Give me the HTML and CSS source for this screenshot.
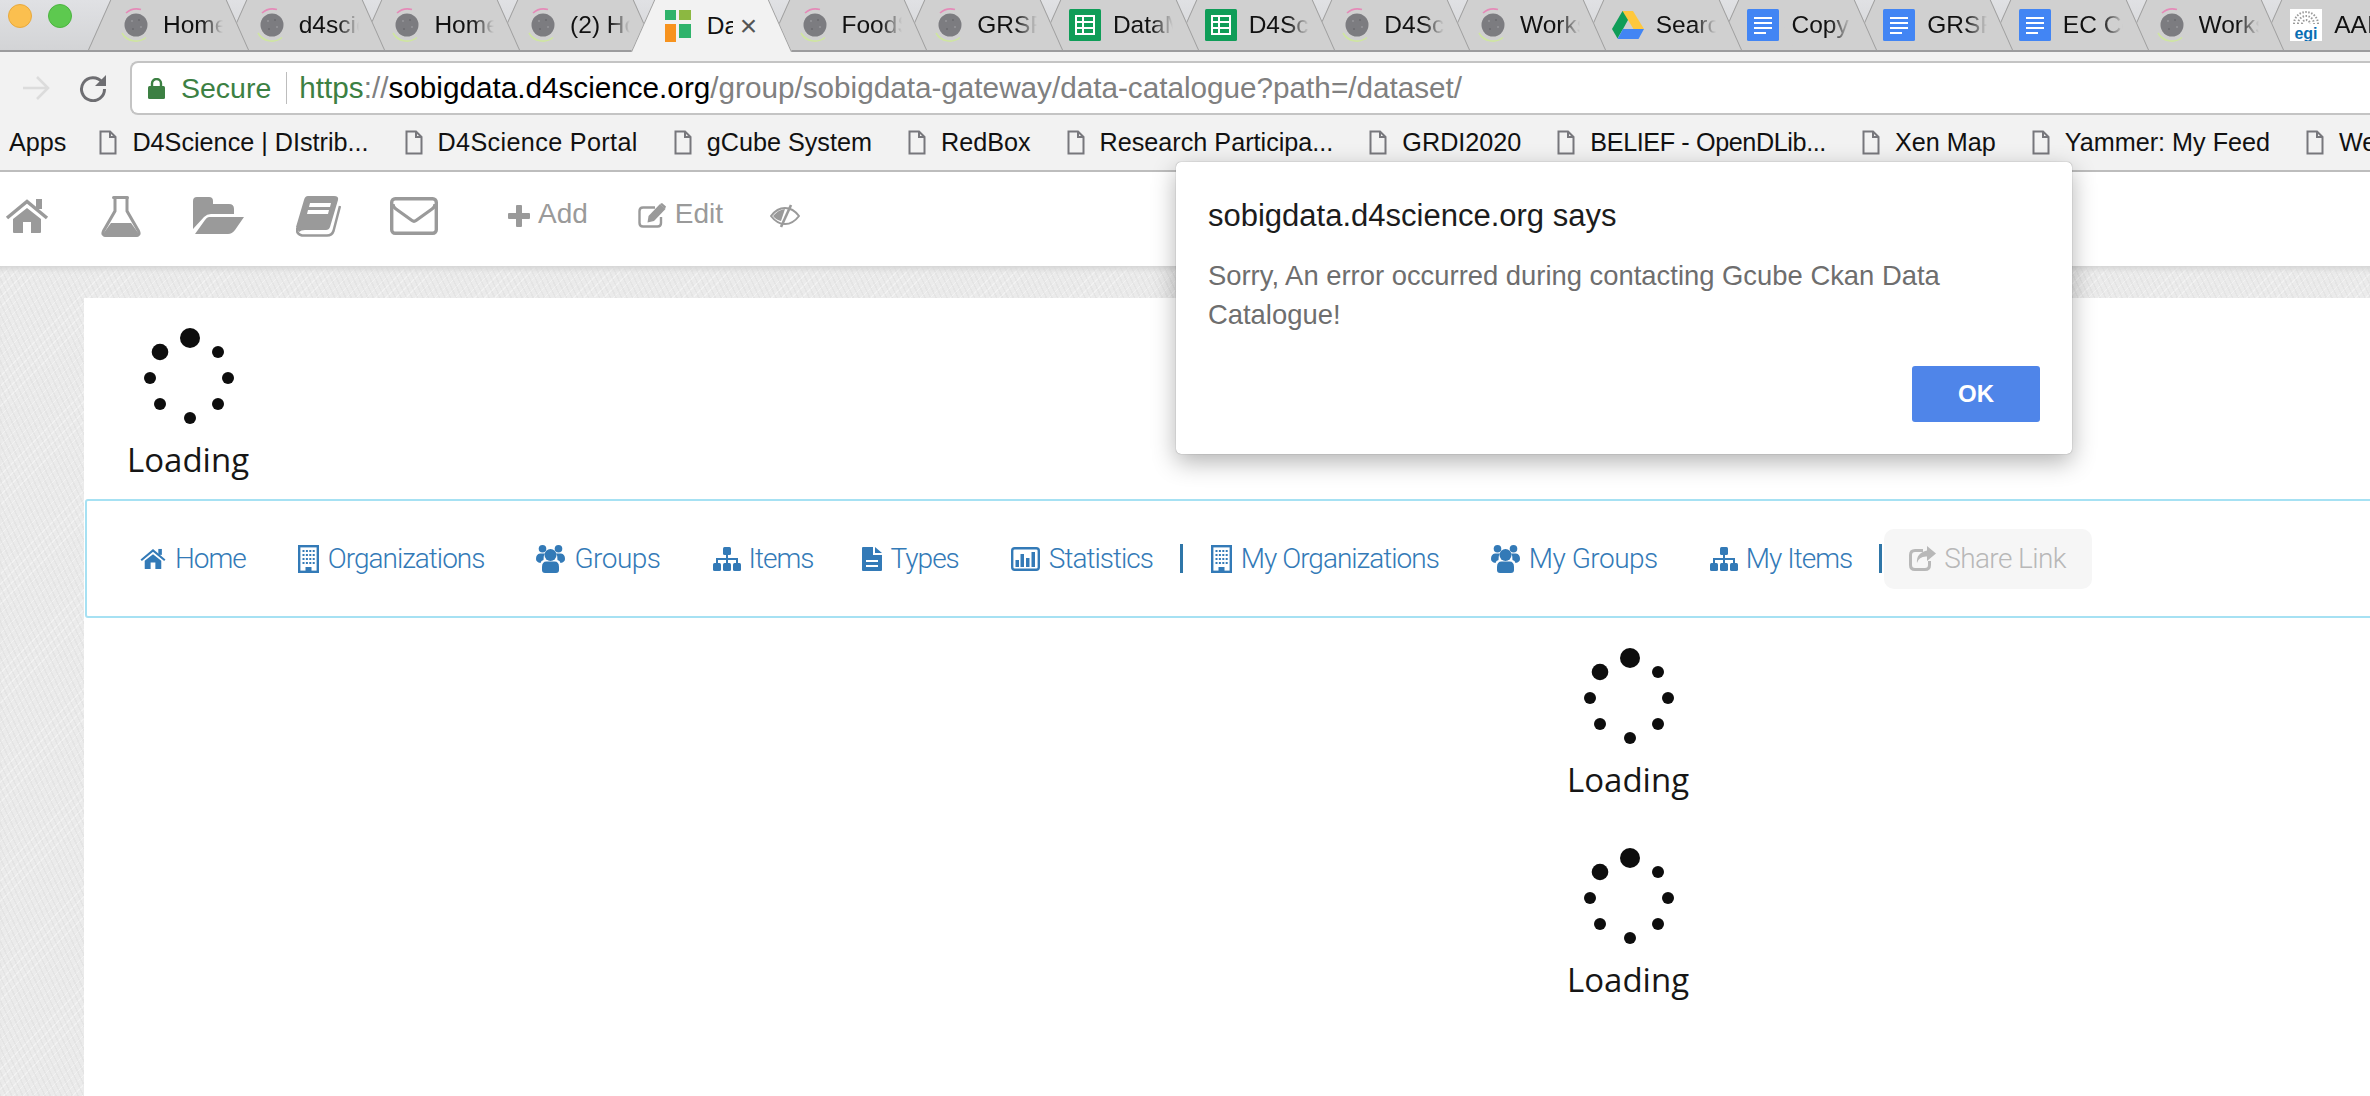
FILE: index.html
```html
<!DOCTYPE html>
<html lang="en">
<head>
<meta charset="utf-8">
<title>Data Catalogue</title>
<link rel="stylesheet" href="styles.css">
</head>
<body>
<svg class="defs" width="0" height="0" aria-hidden="true">
  <defs>
    <symbol id="i-fav" viewBox="0 0 34 34">
      <circle cx="17" cy="17" r="11.5" fill="#7c7c80"/>
      <circle cx="13" cy="13" r="1" fill="#96969a"/><circle cx="20" cy="12" r="1" fill="#6a6a6e"/><circle cx="22" cy="19" r="1" fill="#96969a"/><circle cx="14" cy="21" r="1" fill="#6a6a6e"/>
      <path d="M7 5 A16 16 0 0 1 22 1.6" fill="none" stroke="#e58ab8" stroke-width="1.6"/>
      <path d="M3 25 A16 16 0 0 0 27 29.5" fill="none" stroke="#cfe6a0" stroke-width="1.6"/>
    </symbol>
    <symbol id="i-sheet" viewBox="0 0 32 32">
      <rect width="32" height="32" rx="1.5" fill="#0f9d58"/>
      <path d="M7 7H25V25H7ZM7 13H25M7 19H25M14 7V25" fill="none" stroke="#fff" stroke-width="2"/>
    </symbol>
    <symbol id="i-doc" viewBox="0 0 32 32">
      <rect width="32" height="32" rx="1.5" fill="#4285f4"/>
      <path d="M7 9H25M7 14H25M7 19H25M7 24H19" fill="none" stroke="#fff" stroke-width="2.2"/>
    </symbol>
    <symbol id="i-drive" viewBox="0 0 32 28">
      <path d="M10.5 0H21L11 18 5.5 27.5 0 18Z" fill="#0f9d58"/>
      <path d="M10.5 0H21L32 18H21.5Z" fill="#ffc83d"/>
      <path d="M11 18H32L26.5 28H5.500Z" fill="#4285f4"/>
    </symbol>
    <symbol id="i-catalog" viewBox="0 0 26 32">
      <rect x="0" y="0" width="11" height="10" fill="#2fb36b"/>
      <rect x="14" y="0" width="12" height="10" fill="#8cb841"/>
      <rect x="0" y="14" width="11" height="18" fill="#f7931e"/>
      <rect x="14" y="14" width="12" height="14" fill="#2fb36b"/>
    </symbol>
    <symbol id="i-page" viewBox="0 0 18 25">
      <path d="M1.500 1.500H11L16.500 7V23.500H1.500ZM11 1.500V7H16.500" fill="none" stroke="#77777c" stroke-width="2"/>
    </symbol>
    <symbol id="i-home" viewBox="0 0 44 36">
      <path d="M8 21 22 10 36 21V34Q36 35 35 35H26V24H18V35H9Q8 35 8 34Z" fill="currentColor"/>
      <path d="M2 20 22 3.500 42 20" fill="none" stroke="currentColor" stroke-width="3.500"/>
      <rect x="31" y="1" width="6" height="10" fill="currentColor"/>
    </symbol>
    <symbol id="i-flask" viewBox="0 0 40 41">
      <rect x="11" y="0" width="17" height="3" rx="1.500" fill="currentColor"/>
      <path d="M14 2V15L2.500 35Q0.500 39.500 5 39.500H35Q39.500 39.500 37.500 35L26 15V2" fill="none" stroke="currentColor" stroke-width="3"/>
      <path d="M10 27H30L38 38Q38 41 35 41H5Q2 41 2 38Z" fill="currentColor"/>
    </symbol>
    <symbol id="i-folder" viewBox="0 0 51 38">
      <path d="M0 4Q0 0 4 0H16Q20 0 20 4V7H36Q41 7 41 12V17H18Q14 17 11 20L0 32Z" fill="currentColor"/>
      <path d="M16 20H51L42 33Q39 37 35 37H2L12 23Q14 20 16 20Z" fill="currentColor"/>
    </symbol>
    <symbol id="i-book" viewBox="0 0 45 41">
      <path fill-rule="evenodd" d="M12 0H38Q43 0 42 4L34 31Q33 34 30 34H9Q5 34 3 36L0 31 8 4Q9 0 12 0ZM14 7 13 11H34L35 7ZM12 14 11 18H32L33 14Z" fill="currentColor"/>
      <path d="M1 32Q0 38 6 39.500H31Q36 39.500 37.500 35L44 10" fill="none" stroke="currentColor" stroke-width="2.500"/>
    </symbol>
    <symbol id="i-mail" viewBox="0 0 48 38">
      <rect x="1.700" y="1.700" width="44.600" height="34.600" rx="3.500" fill="none" stroke="currentColor" stroke-width="3.400"/>
      <path d="M3 7 Q3 10 6 12L22 23.500Q24 25 26 23.500L42 12Q45 10 45 7" fill="none" stroke="currentColor" stroke-width="3.200"/>
    </symbol>
    <symbol id="i-plus" viewBox="0 0 22 22">
      <path d="M8 1Q8 0 9 0H13Q14 0 14 1V8H21Q22 8 22 9V13Q22 14 21 14H14V21Q14 22 13 22H9Q8 22 8 21V14H1Q0 14 0 13V9Q0 8 1 8H8Z" fill="currentColor"/>
    </symbol>
    <symbol id="i-edit" viewBox="0 0 29 25">
      <path d="M23 14V20Q23 23.500 19.500 23.500H5Q1.500 23.500 1.500 20V8Q1.500 4.500 5 4.500H17" fill="none" stroke="currentColor" stroke-width="2.400"/>
      <path d="M22 1 27.500 6 16 18 9.500 19.500 10.500 13Z" fill="currentColor"/>
      <path d="M24 0 28 3.500 27 6 22 1Z" fill="currentColor"/>
    </symbol>
    <symbol id="i-eye" viewBox="0 0 30 24">
      <path d="M1 12Q7 4 15 4 23 4 29 12 23 20 15 20 7 20 1 12Z" fill="none" stroke="currentColor" stroke-width="2"/>
      <path d="M3 12Q8 6 15 5L11 17Q6 16 3 12Z" fill="currentColor"/>
      <path d="M21 1 11 23" stroke="currentColor" stroke-width="2.600"/>
    </symbol>
    <symbol id="i-building" viewBox="0 0 21 28">
      <rect x="1.200" y="1.200" width="18.600" height="25.600" fill="none" stroke="currentColor" stroke-width="2.400"/>
      <path d="M4.500 6H17M4.500 10H17M4.500 14H17M4.500 18H17" fill="none" stroke="currentColor" stroke-width="2.200" stroke-dasharray="2 1.400"/>
      <rect x="7.500" y="22" width="6" height="6" fill="currentColor"/>
    </symbol>
    <symbol id="i-users" viewBox="0 0 29 28">
      <circle cx="6.500" cy="3.800" r="3.800" fill="currentColor"/>
      <circle cx="22.500" cy="3.800" r="3.800" fill="currentColor"/>
      <path d="M0 14Q0 9 4 8.500H9Q7 11 7.500 15Q5 15.500 4.500 18 0 17 0 14Z" fill="currentColor"/>
      <path d="M29 14Q29 9 25 8.500H20Q22 11 21.500 15 24 15.500 24.500 18 29 17 29 14Z" fill="currentColor"/>
      <circle cx="14.500" cy="10" r="6" fill="currentColor"/>
      <path d="M6 22Q6 16.500 10.500 16.500H18.500Q23 16.500 23 22V25Q23 28 20 28H9Q6 28 6 25Z" fill="currentColor"/>
    </symbol>
    <symbol id="i-sitemap" viewBox="0 0 28 24">
      <rect x="10" y="0" width="8" height="8" rx="1.500" fill="currentColor"/>
      <path d="M14 8V16M4 16V12H24V16" fill="none" stroke="currentColor" stroke-width="2"/>
      <rect x="0" y="16" width="8" height="8" rx="1.500" fill="currentColor"/>
      <rect x="10" y="16" width="8" height="8" rx="1.500" fill="currentColor"/>
      <rect x="20" y="16" width="8" height="8" rx="1.500" fill="currentColor"/>
    </symbol>
    <symbol id="i-file" viewBox="0 0 20 24">
      <path fill-rule="evenodd" d="M1 0H11V8H20V23Q20 24 19 24H1Q0 24 0 23V1Q0 0 1 0ZM4 13V15H16V13ZM4 18V20H16V18Z" fill="currentColor"/>
      <path d="M13 0 20 6H13Z" fill="currentColor"/>
    </symbol>
    <symbol id="i-chart" viewBox="0 0 29 24">
      <rect x="1.200" y="1.200" width="26.600" height="21.600" rx="2.500" fill="none" stroke="currentColor" stroke-width="2.400"/>
      <rect x="4.500" y="13" width="3.500" height="7" fill="currentColor"/>
      <rect x="9.500" y="7" width="3.500" height="13" fill="currentColor"/>
      <rect x="15" y="11" width="3.500" height="9" fill="currentColor"/>
      <rect x="20.500" y="5" width="3.500" height="15" fill="currentColor"/>
    </symbol>
    <symbol id="i-share" viewBox="0 0 27 25">
      <path d="M14 4.500H6Q1.500 4.500 1.500 9V19Q1.500 23.500 6 23.500H16Q20.500 23.500 20.500 19V15" fill="none" stroke="currentColor" stroke-width="3"/>
      <path d="M18 0 27 7.500 18 15V10.500Q10 10 8 17 7 7 18 4.500Z" fill="currentColor"/>
    </symbol>
    <symbol id="i-loader" viewBox="0 0 122 96">
      <circle cx="63" cy="10" r="10"/>
      <circle cx="33" cy="24" r="8.300"/>
      <circle cx="91" cy="24" r="6"/>
      <circle cx="23" cy="50" r="6"/>
      <circle cx="101" cy="50" r="6"/>
      <circle cx="33" cy="76" r="6"/>
      <circle cx="91" cy="76" r="6"/>
      <circle cx="63" cy="90" r="6"/>
    </symbol>
  </defs>
</svg>

<header class="browser">
  <div class="tabstrip">
    <span class="light light-yellow"></span>
    <span class="light light-green"></span>
    <div class="tabs">
      <div class="tab"><svg class="fav"><use href="#i-fav"/></svg><span class="tab-title">Home</span></div>
      <div class="tab"><svg class="fav"><use href="#i-fav"/></svg><span class="tab-title">d4science</span></div>
      <div class="tab"><svg class="fav"><use href="#i-fav"/></svg><span class="tab-title">Home</span></div>
      <div class="tab"><svg class="fav"><use href="#i-fav"/></svg><span class="tab-title">(2) Home</span></div>
      <div class="tab tab-active"><svg class="fav-catalog"><use href="#i-catalog"/></svg><span class="tab-title tab-title-short">Da</span><span class="tab-close">×</span></div>
      <div class="tab"><svg class="fav"><use href="#i-fav"/></svg><span class="tab-title">FoodS</span></div>
      <div class="tab"><svg class="fav"><use href="#i-fav"/></svg><span class="tab-title">GRSF</span></div>
      <div class="tab"><svg class="fav-square"><use href="#i-sheet"/></svg><span class="tab-title">DataM</span></div>
      <div class="tab"><svg class="fav-square"><use href="#i-sheet"/></svg><span class="tab-title">D4Sci</span></div>
      <div class="tab"><svg class="fav"><use href="#i-fav"/></svg><span class="tab-title">D4Sci</span></div>
      <div class="tab"><svg class="fav"><use href="#i-fav"/></svg><span class="tab-title">Works</span></div>
      <div class="tab"><svg class="fav-square"><use href="#i-drive"/></svg><span class="tab-title">Search</span></div>
      <div class="tab"><svg class="fav-square"><use href="#i-doc"/></svg><span class="tab-title">Copy</span></div>
      <div class="tab"><svg class="fav-square"><use href="#i-doc"/></svg><span class="tab-title">GRSF</span></div>
      <div class="tab"><svg class="fav-square"><use href="#i-doc"/></svg><span class="tab-title">EC Co</span></div>
      <div class="tab"><svg class="fav"><use href="#i-fav"/></svg><span class="tab-title">Works</span></div>
      <div class="tab"><svg class="fav-square" viewBox="0 0 32 32"><rect width="32" height="32" fill="#fff"/><path d="M4 15A12 12 0 0 1 28 15M8 15A8 8 0 0 1 24 15M12 15A4 4 0 0 1 20 15" fill="none" stroke="#9a9a9a" stroke-width="2" stroke-dasharray="1.500 1.500"/><text x="16" y="30" class="egi-text">egi</text></svg><span class="tab-title">AAI</span></div>
    </div>
  </div>

  <div class="addressbar">
    <svg class="nav-arrow" viewBox="0 0 28 26"><path d="M1 13H26M15 2 26 13 15 24" fill="none" stroke="#dcdcdc" stroke-width="2.600"/></svg>
    <svg class="nav-reload" viewBox="0 0 28 28"><path d="M23 8A11.500 11.500 0 1 0 25.500 15" fill="none" stroke="#6e6e72" stroke-width="3"/><path d="M27 1V12H16Z" fill="#6e6e72"/></svg>
    <div class="url-box">
      <svg class="lock" viewBox="0 0 17 21"><rect x="0" y="8" width="17" height="13" rx="1.500" fill="#3c8043"/><path d="M4 9V5.500A4.500 4.500 0 0 1 13 5.500V9" fill="none" stroke="#3c8043" stroke-width="2.400"/></svg>
      <span class="secure">Secure</span>
      <span class="url-sep"></span>
      <span class="url"><span class="url-scheme">https</span><span class="url-dim">://</span><span class="url-host">sobigdata.d4science.org</span><span class="url-dim">/group/sobigdata-gateway/data-catalogue?path=/dataset/</span></span>
    </div>
  </div>

  <nav class="bookmarks">
    <span class="bm bm-apps">Apps</span>
    <span class="bm"><svg class="page-icon"><use href="#i-page"/></svg>D4Science | DIstrib...</span>
    <span class="bm bm-loose"><svg class="page-icon"><use href="#i-page"/></svg>D4Science Portal</span>
    <span class="bm"><svg class="page-icon"><use href="#i-page"/></svg>gCube System</span>
    <span class="bm"><svg class="page-icon"><use href="#i-page"/></svg>RedBox</span>
    <span class="bm"><svg class="page-icon"><use href="#i-page"/></svg>Research Participa...</span>
    <span class="bm"><svg class="page-icon"><use href="#i-page"/></svg>GRDI2020</span>
    <span class="bm bm-tight"><svg class="page-icon"><use href="#i-page"/></svg>BELIEF - OpenDLib...</span>
    <span class="bm"><svg class="page-icon"><use href="#i-page"/></svg>Xen Map</span>
    <span class="bm"><svg class="page-icon"><use href="#i-page"/></svg>Yammer: My Feed</span>
    <span class="bm"><svg class="page-icon"><use href="#i-page"/></svg>Welcome</span>
  </nav>
</header>

<div class="toolbar">
  <svg class="tool tool-home"><use href="#i-home"/></svg>
  <svg class="tool tool-flask"><use href="#i-flask"/></svg>
  <svg class="tool tool-folder"><use href="#i-folder"/></svg>
  <svg class="tool tool-book"><use href="#i-book"/></svg>
  <svg class="tool tool-mail"><use href="#i-mail"/></svg>
  <span class="action action-first"><svg class="action-plus"><use href="#i-plus"/></svg>Add</span>
  <span class="action"><svg class="action-edit"><use href="#i-edit"/></svg>Edit</span>
  <svg class="action-eye"><use href="#i-eye"/></svg>
</div>

<main class="page">
  <div class="content">
    <div class="head">
      <div class="loader"><svg class="loader-dots"><use href="#i-loader"/></svg><span class="loader-text">Loading</span></div>
    </div>
    <nav class="menu">
      <a class="menu-item"><svg class="mi mi-home"><use href="#i-home"/></svg>Home</a>
      <a class="menu-item"><svg class="mi mi-building"><use href="#i-building"/></svg>Organizations</a>
      <a class="menu-item menu-item-wide"><svg class="mi mi-users"><use href="#i-users"/></svg>Groups</a>
      <a class="menu-item menu-item-close"><svg class="mi mi-sitemap"><use href="#i-sitemap"/></svg>Items</a>
      <a class="menu-item"><svg class="mi mi-file"><use href="#i-file"/></svg>Types</a>
      <a class="menu-item"><svg class="mi mi-chart"><use href="#i-chart"/></svg>Statistics</a>
      <span class="menu-sep"></span>
      <a class="menu-item"><svg class="mi mi-building"><use href="#i-building"/></svg>My Organizations</a>
      <a class="menu-item menu-item-wide"><svg class="mi mi-users"><use href="#i-users"/></svg>My Groups</a>
      <a class="menu-item"><svg class="mi mi-sitemap"><use href="#i-sitemap"/></svg>My Items</a>
      <span class="menu-sep menu-sep-tight"></span>
      <a class="menu-share"><svg class="mi mi-share"><use href="#i-share"/></svg>Share Link</a>
    </nav>
    <div class="results">
      <div class="loader"><svg class="loader-dots"><use href="#i-loader"/></svg><span class="loader-text">Loading</span></div>
      <div class="loader"><svg class="loader-dots"><use href="#i-loader"/></svg><span class="loader-text">Loading</span></div>
    </div>
  </div>
</main>

<div class="dialog" role="alertdialog">
  <div class="dialog-title">sobigdata.d4science.org says</div>
  <div class="dialog-msg">Sorry, An error occurred during contacting Gcube Ckan Data Catalogue!</div>
  <div class="dialog-actions"><button class="dialog-ok">OK</button></div>
</div>
</body>
</html>
```

FILE: styles.css
```css
* { box-sizing: border-box; }
html, body { margin: 0; padding: 0; height: 1096px; overflow: hidden; background: #fff; }
body { font-family: "Liberation Sans", Arial, sans-serif; color: #111; width: 2370px; position: relative; }
.defs { position: absolute; }

/* Tab strip */
.tabstrip { height: 52px; display: flex; align-items: flex-start; position: relative; border-bottom: 2px solid #9c9c9e; background: linear-gradient(#e0e1e4, #d3d4d6); }
.light { position: absolute; top: 4px; width: 24px; height: 24px; border-radius: 50%; }
.light-yellow { left: 8px; background: #fbbf4f; border: 1px solid #e8a93d; }
.light-green { left: 48px; background: #5dc94f; border: 1px solid #4cb440; }
.tabs { display: flex; margin-left: 88px; height: 50px; }
.tab { position: relative; flex: none; width: 161px; height: 50px; margin-right: -25.3px; padding-left: 31px; display: flex; align-items: center; gap: 10px; font-size: 24.500px; }
.tab::before, .tab::after { content: ""; position: absolute; top: 0; bottom: 0; width: 51%; background: #d0d0d0; z-index: 0; }
.tab::before { left: 0; border-left: 1px solid #9e9e9e; transform-origin: bottom left; transform: skewX(-24deg); }
.tab::after { right: 0; border-right: 1px solid #9e9e9e; transform-origin: bottom right; transform: skewX(24deg); }
.tab:nth-child(1) { z-index: 17; } .tab:nth-child(2) { z-index: 16; } .tab:nth-child(3) { z-index: 15; } .tab:nth-child(4) { z-index: 14; }
.tab:nth-child(5) { z-index: 30; } .tab:nth-child(6) { z-index: 12; } .tab:nth-child(7) { z-index: 11; } .tab:nth-child(8) { z-index: 10; }
.tab:nth-child(9) { z-index: 9; } .tab:nth-child(10) { z-index: 8; } .tab:nth-child(11) { z-index: 7; } .tab:nth-child(12) { z-index: 6; }
.tab:nth-child(13) { z-index: 5; } .tab:nth-child(14) { z-index: 4; } .tab:nth-child(15) { z-index: 3; } .tab:nth-child(16) { z-index: 2; } .tab:nth-child(17) { z-index: 1; }
.tab-active { height: 52px; margin-bottom: -2px; padding-left: 34px; }
.tab-active::before, .tab-active::after { background: #f2f2f2; }
.fav, .fav-square, .fav-catalog, .tab-title, .tab-close { position: relative; z-index: 1; flex: none; }
.fav { width: 34px; height: 34px; }
.fav-square { width: 32px; height: 32px; margin: 0 2px 0 0; }
.fav-catalog { width: 26px; height: 32px; margin-right: 6px; }
.tab-title { width: 60px; overflow: hidden; white-space: nowrap; -webkit-mask-image: linear-gradient(90deg, #000 65%, transparent 100%); mask-image: linear-gradient(90deg, #000 65%, transparent 100%); }
.tab-title-short { width: 26px; -webkit-mask-image: none; mask-image: none; }
.tab-close { font-size: 30px; color: #555; margin-left: -3px; }
.egi-text { font-family: "Liberation Sans", Arial, sans-serif; font-size: 16px; font-weight: 700; fill: #0a6fb4; text-anchor: middle; }

/* Address bar */
.addressbar { height: 63px; background: #f2f2f2; display: flex; align-items: flex-end; }
.nav-arrow { width: 28px; height: 26px; margin: 0 0 14px 22px; flex: none; }
.nav-reload { width: 28px; height: 28px; margin: 0 0 13px 29px; flex: none; }
.url-box { flex: 1; height: 54px; margin-left: 23px; background: #fff; border: 2px solid #c4c4c4; border-right: 0; border-radius: 8px 0 0 8px; display: flex; align-items: center; padding-left: 16px; font-size: 29.700px; white-space: nowrap; }
.lock { width: 17px; height: 21px; flex: none; }
.secure { margin-left: 16px; color: #3c8043; font-size: 28.500px; }
.url-sep { width: 1px; height: 32px; background: #bdbdbd; margin: 0 12px 0 15px; flex: none; }
.url-scheme { color: #3c8043; }
.url-dim { color: #808080; }
.url-host { color: #000; }

/* Bookmarks */
.bookmarks { height: 57px; background: #f2f2f2; border-bottom: 2px solid #bdbdbd; display: flex; align-items: center; padding-left: 9px; gap: 36px; font-size: 25.200px; white-space: nowrap; overflow: hidden; color: #111; }
.bm { display: flex; align-items: center; flex: none; }
.bm-apps { margin-right: -3px; }
.bm-loose { letter-spacing: .35px; }
.bm-tight { letter-spacing: -.4px; }
.page-icon { width: 18px; height: 25px; margin-right: 15px; flex: none; }

/* Site toolbar */
.toolbar { height: 94px; background: #fff; display: flex; align-items: center; padding: 0 0 6px 5px; gap: 52px; color: #9a9a9a; }
.tool { flex: none; color: #9a9a9a; }
.tool-home { width: 44px; height: 36px; }
.tool-flask { width: 40px; height: 41px; }
.tool-folder { width: 51px; height: 38px; }
.tool-book { width: 45px; height: 41px; }
.tool-mail { width: 48px; height: 38px; margin-left: -3px; }
.action { display: flex; align-items: center; gap: 8px; font-size: 28px; color: #9a9a9a; margin: -4px 0 0 -2px; }
.action svg { margin-top: 3px; }
.action-first { margin-left: 18px; }
.action-plus { width: 22px; height: 22px; }
.action-edit { width: 29px; height: 25px; }
.action-eye { width: 30px; height: 24px; margin-left: -5px; }

/* Page */
.page { height: 830px; overflow: hidden; padding: 32px 0 0 84px; background-color: #ebebeb; background-image: repeating-linear-gradient(65deg, rgba(0,0,0,.03) 0 1.500px, transparent 1.500px 5px), repeating-linear-gradient(-45deg, rgba(255,255,255,.35) 0 1px, transparent 1px 7px); box-shadow: inset 0 6px 5px -3px #d4d4d4; }
.content { width: 2400px; height: 800px; background: #fff; }
.head { height: 201px; padding: 30px 0 0 43px; }
.loader { display: flex; flex-direction: column; width: 122px; color: #161616; }
.loader-dots { width: 122px; height: 96px; fill: #0d0d0d; flex: none; }
.loader-text { font-family: "Open Sans", sans-serif; font-size: 33px; line-height: 44px; margin-top: 14px; text-align: center; white-space: nowrap; }

.menu { height: 119px; margin-left: 1px; border: 2px solid #a6e1f3; border-radius: 3px; display: flex; align-items: center; padding-left: 53px; font-family: Roboto, "Liberation Sans", sans-serif; font-weight: 300; font-size: 28px; letter-spacing: -1px; color: #337ab7; white-space: nowrap; }
.menu-item { display: flex; align-items: center; gap: 9px; margin-right: 52px; flex: none; }
.menu-item-wide { letter-spacing: -.5px; }
.menu-item-close { margin-right: 48px; }
.mi { flex: none; }
.mi-home { width: 26px; height: 22px; }
.mi-building { width: 21px; height: 28px; }
.mi-users { width: 29px; height: 28px; }
.mi-sitemap { width: 28px; height: 24px; margin-right: -1px; }
.mi-file { width: 20px; height: 24px; }
.mi-chart { width: 29px; height: 24px; }
.mi-share { width: 27px; height: 25px; }
.menu-sep { width: 3px; height: 29px; background: #2f76a8; flex: none; margin: 0 28px 0 -25px; }
.menu-sep-tight { margin-right: 2px; }
.menu-share { display: flex; align-items: center; gap: 8px; height: 60px; padding: 0 26px 0 25px; border-radius: 10px; background: #f6f6f6; color: #b8b8b8; letter-spacing: -.6px; flex: none; }

.results { margin: 30px 0 0 1483px; display: flex; flex-direction: column; gap: 46px; }

/* Alert */
.dialog { position: absolute; left: 1176px; top: 162px; width: 896px; height: 292px; background: #fff; border-radius: 5px; box-shadow: 0 0 1px rgba(0,0,0,.5), 0 8px 24px rgba(0,0,0,.3); padding: 32px; display: flex; flex-direction: column; }
.dialog-title { font-size: 31px; line-height: 44px; color: #1c1c1c; }
.dialog-msg { margin-top: 18px; font-size: 27.400px; line-height: 39px; color: #6e6e6e; width: 780px; }
.dialog-actions { margin-top: auto; display: flex; justify-content: flex-end; }
.dialog-ok { width: 128px; height: 56px; border: 0; border-radius: 3px; background: #4f85e9; color: #fff; font: 700 24px "Liberation Sans", Arial, sans-serif; }
```
